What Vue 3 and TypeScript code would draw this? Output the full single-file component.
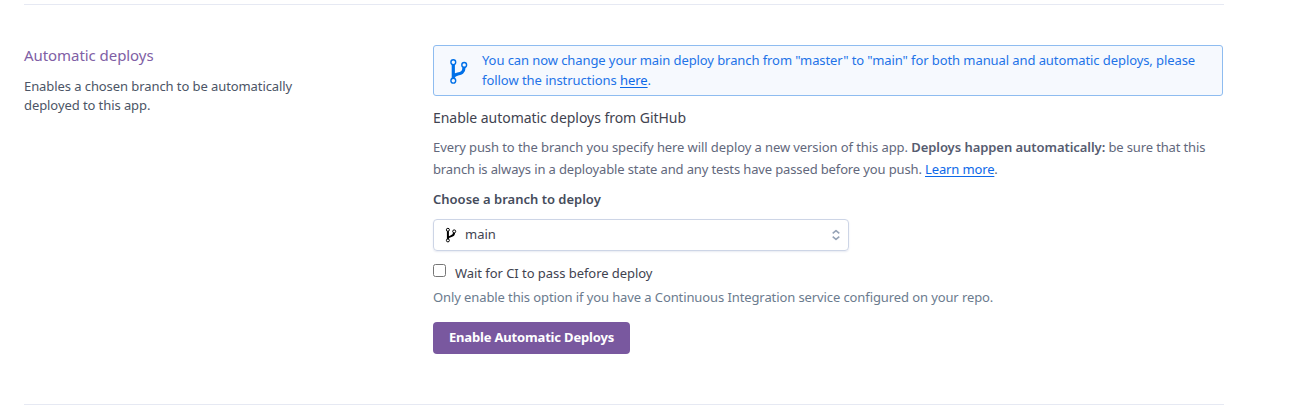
<script setup lang="ts">
import { ref } from 'vue'

const branch = ref('main')
const waitForCi = ref(false)
</script>

<template>
  <main class="page">
    <section class="panel">
      <aside class="summary">
        <h2>Automatic deploys</h2>
        <p><span class="s1">Enables a chosen branch to be automatically</span><br /><span class="s2">deployed to this app.</span></p>
      </aside>
      <div class="content">
        <div class="notice">
          <svg class="notice-icon" width="20" height="26" viewBox="0 0 20 26" fill="none" stroke="#0070e8">
            <path d="M4.3 6.5V21M4.3 19.5C4.8 14 15 18.5 15 9.5" stroke-width="3.2" />
            <circle cx="4.3" cy="4.2" r="2.4" fill="#f6f9fe" stroke-width="1.4" />
            <circle cx="15.2" cy="6.9" r="2.4" fill="#f6f9fe" stroke-width="1.4" />
            <circle cx="4.3" cy="22.7" r="2.4" fill="#f6f9fe" stroke-width="1.4" />
          </svg>
          <p><span class="n1">You can now change your main deploy branch from "master" to "main" for both manual and automatic deploys, please</span><br /><span class="n2">follow the instructions <a>here</a>.</span></p>
        </div>
        <h3>Enable automatic deploys from GitHub</h3>
        <p class="description"><span class="d1">Every push to the branch you specify here will deploy a new version of this app. </span><b>Deploys happen automatically:</b><span class="d2"> be sure that this</span><br /><span class="d3">branch is always in a deployable state and any tests have passed before you push. <a>Learn more</a>.</span></p>
        <div class="label"><span>Choose a branch to deploy</span></div>
        <div class="select">
          <svg class="branch-icon" width="12" height="16" viewBox="0 0 12 16" fill="none" stroke="#000">
            <path d="M2.9 4v8.5M2.9 11.5c.4-3.3 6.2-.8 6.2-5.7" stroke-width="2" />
            <circle cx="2.9" cy="2.8" r="1.5" fill="#fff" />
            <circle cx="9.2" cy="4.4" r="1.5" fill="#fff" />
            <circle cx="2.9" cy="13.4" r="1.5" fill="#fff" />
          </svg>
          <span class="value">{{ branch }}</span>
          <svg class="chevrons" width="10" height="12" viewBox="0 0 10 12" fill="none" stroke="#96a3b6" stroke-width="1.6" stroke-linejoin="round">
            <path d="M1.7 4.3 5 1.6l3.3 2.7M1.7 7.7 5 10.4l3.3-2.7" />
          </svg>
        </div>
        <label class="check"><input v-model="waitForCi" type="checkbox" /><span>Wait for CI to pass before deploy</span></label>
        <p class="hint"><span>Only enable this option if you have a Continuous Integration service configured on your repo.</span></p>
        <button type="button"><span>Enable Automatic Deploys</span></button>
      </div>
    </section>
  </main>
</template>

<style>
html,
body {
  background: #fff;
}
</style>

<style scoped>
.page {
  box-sizing: border-box;
  height: 412px;
  padding: 4px 78px 0 24px;
  overflow: hidden;
  font: 13px/20px "Noto Sans", sans-serif;
  color: #3f4350;
  white-space: nowrap;
}
.panel {
  box-sizing: border-box;
  display: grid;
  grid-template-columns: 409px 790px;
  height: 401px;
  padding-top: 40px;
  border-top: 1px solid #e6e9f3;
  border-bottom: 1px solid #e6e9f3;
}
h2, h3, p { margin: 0; font-weight: 400; }
h2 { font-size: 15px; line-height: 20px; color: #8060a5; letter-spacing: -0.06px; }
.summary p { margin-top: 12px; line-height: 19px; color: #4c5566; letter-spacing: -0.08px; }
.notice {
  box-sizing: border-box;
  display: flex;
  align-items: center;
  height: 51px;
  padding-left: 15px;
  border: 1px solid #8ebcf0;
  border-radius: 3px;
  background: #f6f9fe;
  color: #2273e8;
}
.notice-icon { margin-right: 13px; }
.notice p { padding-bottom: 2px; line-height: 20px; }
.n1 { letter-spacing: -0.085px; }
.n2 { letter-spacing: -0.05px; }
a { color: #0d68e8; text-decoration: underline; text-underline-offset: 2px; }
h3 { margin-top: 12px; font-size: 14px; line-height: 20px; letter-spacing: -0.04px; }
.description { margin-top: 8px; line-height: 22px; color: #62687c; }
.description b { font-weight: 600; color: #565c70; letter-spacing: -0.05px; }
.d1 { letter-spacing: -0.09px; }
.d2 { letter-spacing: -0.14px; }
.d3 { letter-spacing: -0.134px; }
.label { margin-top: 9px; font-weight: 600; color: #454c5c; }
.select {
  box-sizing: border-box;
  display: flex;
  align-items: center;
  width: 416px;
  height: 32px;
  margin-top: 10px;
  padding: 0 7px 0 11px;
  border: 1px solid #cdd5e6;
  border-radius: 4px;
  box-shadow: 0 1px 2px #e8ebf2;
}
.branch-icon { margin-right: 8px; }
.value { padding-bottom: 2px; }
.chevrons { margin-left: auto; }
.check { display: flex; margin-top: 12px; letter-spacing: -0.05px; }
.check input { width: 13px; height: 13px; margin: 1px 9px 0 0; }
.hint { margin-top: 4px; color: #6b7b8e; letter-spacing: -0.1px; }
button {
  display: block;
  width: 197px;
  height: 32px;
  margin-top: 15px;
  padding: 0 0 2px;
  border: 0;
  border-radius: 4px;
  background: #79589f;
  color: #fff;
  font: 700 13px/20px "Noto Sans", sans-serif;
  letter-spacing: -0.17px;
}
</style>
